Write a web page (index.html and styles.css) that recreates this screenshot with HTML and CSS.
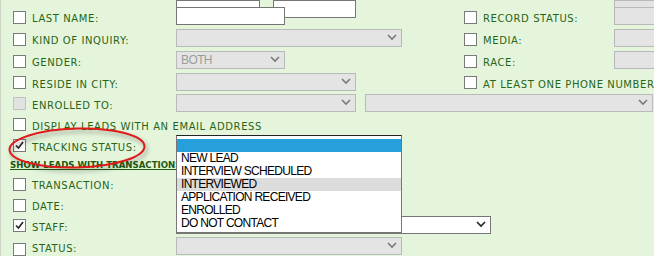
FILE: index.html
```html
<!DOCTYPE html>
<html>
<head>
<meta charset="utf-8">
<link rel="stylesheet" href="styles.css">
</head>
<body>
<div class="form">
  <div class="row r0">
    <div class="c3 pair"><span class="box white w84"></span><span class="box white w83"></span></div>
    <span class="c6 box gray full"></span>
  </div>
  <div class="row h22">
    <span class="cb"></span><span class="lbl">LAST NAME:</span>
    <span class="c3 box white w109"></span>
    <span class="cb c4"></span><span class="lbl c5">RECORD STATUS:</span>
    <span class="c6 box gray full"></span>
  </div>
  <div class="row h22">
    <span class="cb"></span><span class="lbl">KIND OF INQUIRY:</span>
    <span class="c3 box gray sel w226"><svg class="chev" viewBox="0 0 10 7"><polyline points="1,1 5,5 9,1"/></svg></span>
    <span class="cb c4"></span><span class="lbl c5">MEDIA:</span>
    <span class="c6 box gray full"></span>
  </div>
  <div class="row h22">
    <span class="cb"></span><span class="lbl">GENDER:</span>
    <span class="c3 box gray sel w109"><span class="val">BOTH</span><svg class="chev" viewBox="0 0 10 7"><polyline points="1,1 5,5 9,1"/></svg></span>
    <span class="cb c4"></span><span class="lbl c5">RACE:</span>
    <span class="c6 box gray full"></span>
  </div>
  <div class="row h21">
    <span class="cb"></span><span class="lbl">RESIDE IN CITY:</span>
    <span class="c3 box gray sel w180"><svg class="chev" viewBox="0 0 10 7"><polyline points="1,1 5,5 9,1"/></svg></span>
    <span class="cb c4"></span><span class="lbl c5 wrapfree">AT LEAST ONE PHONE NUMBER IS VALID</span>
  </div>
  <div class="row h21">
    <span class="cb off"></span><span class="lbl">ENROLLED TO:</span>
    <div class="span36 pair2">
      <span class="box gray sel w180"><svg class="chev" viewBox="0 0 10 7"><polyline points="1,1 5,5 9,1"/></svg></span>
      <span class="box gray sel w288"><svg class="chev" viewBox="0 0 10 7"><polyline points="1,1 5,5 9,1"/></svg></span>
    </div>
  </div>
  <div class="row h21">
    <span class="cb"></span><span class="lbl wide">DISPLAY LEADS WITH AN EMAIL ADDRESS</span>
  </div>
  <div class="row h21">
    <span class="cb on"><svg viewBox="0 0 11 11"><polyline points="2,5.5 4.5,8 9,2"/></svg></span><span class="lbl">TRACKING STATUS:</span>
    <div class="c3 anchor">
      <div class="listbox">
        <div class="opt sel-blue"></div>
        <div class="opt">NEW LEAD</div>
        <div class="opt">INTERVIEW SCHEDULED</div>
        <div class="opt hover">INTERVIEWED</div>
        <div class="opt">APPLICATION RECEIVED</div>
        <div class="opt">ENROLLED</div>
        <div class="opt">DO NOT CONTACT</div>
      </div>
    </div>
  </div>
  <div class="linkrow"><a class="link">SHOW LEADS WITH TRANSACTIONS</a></div>
  <div class="row h22">
    <span class="cb"></span><span class="lbl">TRANSACTION:</span>
  </div>
  <div class="row h20">
    <span class="cb"></span><span class="lbl">DATE:</span>
  </div>
  <div class="row h21">
    <span class="cb on"><svg viewBox="0 0 11 11"><polyline points="2,5.5 4.5,8 9,2"/></svg></span><span class="lbl">STAFF:</span>
    <span class="c3 box white sel w315"><svg class="chev dark" viewBox="0 0 10 7"><polyline points="1,1 5,5 9,1"/></svg></span>
  </div>
  <div class="row top">
    <span class="cb low"></span><span class="lbl low">STATUS:</span>
    <span class="c3 box gray sel w226 nudge"><svg class="chev" viewBox="0 0 10 7"><polyline points="1,1 5,5 9,1"/></svg></span>
  </div>
  <svg class="ring" viewBox="0 0 150 50" width="150" height="50">
    <ellipse cx="72" cy="23" rx="67.5" ry="19.5" transform="rotate(-1.5 72 23)"/>
  </svg>
</div>
</body>
</html>
```

FILE: styles.css
```css
html, body {
  margin: 0;
  padding: 0;
}
body {
  width: 654px;
  height: 256px;
  overflow: hidden;
  background: #e5f5dc;
  font-family: "DejaVu Sans", Verdana, sans-serif;
}
.form {
  position: relative;
  height: 256px;
  border-left: 1px solid #cdd6c6;
  padding-left: 12px;
}
.row {
  display: grid;
  grid-template-columns: 19px 144px 288px 19px 131px 1fr;
  align-items: center;
}
.r0 { height: 5px; align-items: end; }
.h22 { height: 22px; }
.h21 { height: 21px; }
.h20 { height: 20px; }
.top { align-items: start; height: 24px; }
.c3 { grid-column: 3; }
.c4 { grid-column: 4; }
.c5 { grid-column: 5; }
.c6 { grid-column: 6; }
.span36 { grid-column: 3 / 7; }

.cb {
  grid-column: 1;
  width: 11px;
  height: 11px;
  margin-top: 2px;
  border: 1px solid #7a7a7a;
  background: #fff;
  box-sizing: content-box;
  display: flex;
  align-items: center;
  justify-content: center;
}
.cb.c4 { grid-column: 4; }
.cb.off { background: #e2e2e2; border-color: #c2c2c2; }
.cb svg { width: 11px; height: 11px; }
.cb svg polyline { fill: none; stroke: #222; stroke-width: 1.6; }
.lbl {
  grid-column: 2;
  margin-top: 6px;
  color: #276516;
  font-size: 10px;
  letter-spacing: 0.6px;
  white-space: nowrap;
  line-height: 12px;
}
.lbl.c5 { grid-column: 5; }
.lbl.wide { grid-column: 2 / 7; }
.lbl.wrapfree { grid-column: 5 / 7; }
.cb.low { margin-top: 8px; }
.lbl.low { margin-top: 8px; }

.box {
  height: 18px;
  box-sizing: border-box;
  display: flex;
  align-items: center;
  position: relative;
}
.white { background: #fff; border: 1px solid #767676; }
.gray { background: #e4e4e4; border: 1px solid #b9b9b9; }
.full { width: 60px; }
.w83 { width: 83px; }
.w84 { width: 84px; }
.w109 { width: 109px; }
.w180 { width: 180px; }
.w226 { width: 226px; }
.w288 { width: 288px; }
.w315 { width: 315px; }
.nudge { margin-top: 2px; }
.pair { display: flex; gap: 13px; align-items: end; }
.pair2 { display: flex; gap: 9px; align-items: center; }

.chev {
  position: absolute;
  right: 4px;
  top: 4px;
  width: 10px;
  height: 7px;
}
.chev polyline { fill: none; stroke: #7a7a7a; stroke-width: 1.6; }
.chev.dark polyline { stroke: #222; }
.val {
  padding-left: 4px;
  font-family: "Liberation Sans", Arial, sans-serif;
  font-size: 12px;
  letter-spacing: -0.6px;
  color: #9c9c9c;
}

.anchor { position: relative; height: 21px; }
.listbox {
  position: absolute;
  left: 0;
  top: 1px;
  width: 226px;
  height: 98px;
  box-sizing: border-box;
  background: #fff;
  border: 1px solid #767676;
  border-top: 1px solid #222;
  padding-top: 3px;
  z-index: 2;
}
.opt {
  height: 13px;
  line-height: 13px;
  padding-left: 4px;
  font-family: "Liberation Sans", Arial, sans-serif;
  font-size: 12px;
  letter-spacing: -0.7px;
  color: #000;
  white-space: nowrap;
}
.opt.sel-blue { background: #279fdb; }
.opt.hover { background: #dcdcdc; }

.linkrow {
  height: 17px;
  display: flex;
  align-items: center;
  margin-left: -3px;
  padding-top: 2px;
  box-sizing: border-box;
}
.link {
  color: #1f5a0e;
  font-weight: bold;
  font-size: 8.6px;
  text-decoration: underline;
  white-space: nowrap;
}

.ring {
  position: absolute;
  left: 4px;
  top: 125px;
  overflow: visible;
  z-index: 1;
  filter: drop-shadow(2px 3px 2px rgba(0, 0, 0, 0.35));
}
.ring ellipse { fill: none; stroke: #e01919; stroke-width: 2; }
```
